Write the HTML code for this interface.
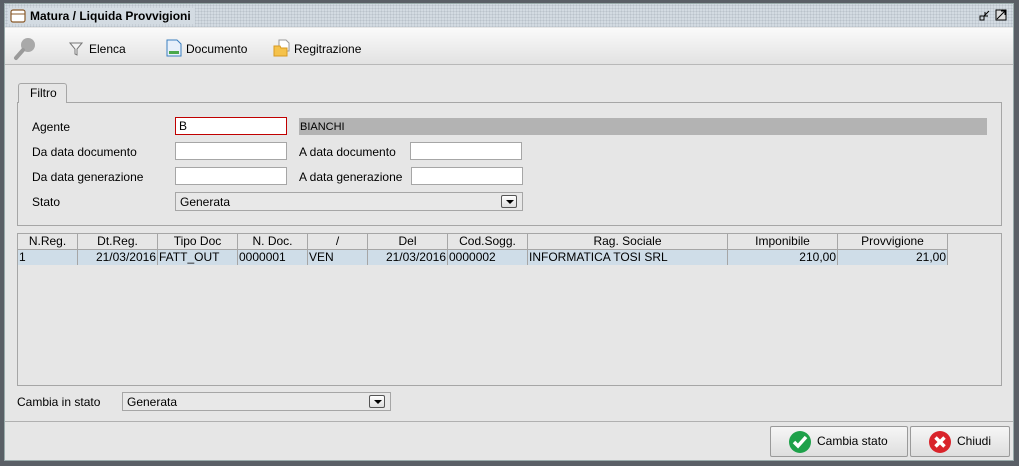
<!DOCTYPE html>
<html><head><meta charset="utf-8"><style>
*{box-sizing:border-box;margin:0;padding:0}
body{width:1019px;height:466px;background:#5a5f66;font-family:"Liberation Sans",sans-serif;font-size:12px;color:#000;position:relative;overflow:hidden}
.a{position:absolute}
.win{left:4px;top:3px;width:1010px;height:458px;background:#e6e6e6;border:1px solid #9aa}
.title{left:5px;top:4px;width:1008px;height:23px;background-color:#d3dbe2;background-image:radial-gradient(#b9c2ca 0.8px,transparent 0.9px);background-size:3px 3px}
.tt{left:8px;top:8px;height:16px;padding:0 4px 0 22px;background:#d3dbe2;font-weight:bold;font-size:12px;line-height:16px}
.tb{left:5px;top:28px;width:1008px;height:37px;background:linear-gradient(#fafafa,#e2e2e2);border-bottom:1px solid #b8b8b8}
.inp{background:#fff;border:1px solid #a6a6a6;height:18px;line-height:16px;padding-left:3px}
.lbl{line-height:14px}
.combo{background:#e8e8e8;border:1px solid #a6a6a6;height:19px;line-height:18px;padding-left:4px}
.arr{position:absolute;right:5px;top:2px;width:16px;height:13px;border:1px solid #555;border-radius:2px;background:linear-gradient(#fff,#ddd)}
.arr:after{content:"";position:absolute;left:4px;top:4px;border-left:4px solid transparent;border-right:4px solid transparent;border-top:4px solid #000}
.th{top:234px;height:16px;border-right:1px solid #a6a6a6;border-bottom:1px solid #a6a6a6;text-align:center;line-height:15px;background:#e6e6e6}
.td{top:250px;height:15px;border-right:1px solid #a6a6a6;background:#cfdde8;line-height:14px;padding:0 1px;white-space:nowrap}
.btn{top:426px;height:31px;border:1px solid #9a9a9a;border-radius:2px;background:linear-gradient(#f6f6f6,#dedede);line-height:29px;font-size:12px}
</style></head><body>
<div class="a win"></div>
<div class="a title"></div>
<div class="a tt">Matura / Liquida Provvigioni</div>
<svg class="a" style="left:10px;top:9px" width="16" height="14"><rect x="1" y="1" width="14" height="12" rx="2" fill="#fff" stroke="#8a5a2a" stroke-width="1.2"/><line x1="1" y1="5" x2="15" y2="5" stroke="#8a5a2a"/></svg>
<svg class="a" style="left:978px;top:7px" width="34" height="16"><rect x="2" y="9" width="4" height="4" fill="none" stroke="#000"/><path d="M6 9 L11 4 M7 5 L7 9 L10 9" stroke="#000" fill="none"/><rect x="18" y="3" width="10" height="10" fill="#ddd" stroke="#000"/><path d="M19 12 L27 4 M23 4 L27 4 L27 8" stroke="#000" fill="none"/></svg>
<div class="a tb"></div>
<svg class="a" style="left:12px;top:36px" width="26" height="26"><circle cx="16" cy="9" r="7" fill="#a9a9a9"/><line x1="11" y1="14" x2="4" y2="22" stroke="#9a9a9a" stroke-width="4" stroke-linecap="round"/></svg>
<svg class="a" style="left:69px;top:41px" width="14" height="16"><path d="M1 2 H13 L8 8 V14 L6 13 V8 Z" fill="#f4f4f4" stroke="#777"/></svg>
<div class="a" style="left:89px;top:42px;line-height:14px">Elenca</div>
<svg class="a" style="left:166px;top:39px" width="16" height="18"><path d="M1 1 H11 L15 5 V17 H1 Z" fill="#e8f0fa" stroke="#3b7fc0"/><rect x="3" y="12" width="10" height="3" fill="#4aa84a"/></svg>
<div class="a" style="left:186px;top:42px;line-height:14px">Documento</div>
<svg class="a" style="left:273px;top:39px" width="17" height="18"><path d="M6 1 H13 L16 4 V12 H6 Z" fill="#fff" stroke="#999"/><path d="M1 7 H7 L8 9 H14 V17 H1 Z" fill="#f5c24b" stroke="#d89a20"/></svg>
<div class="a" style="left:294px;top:42px;line-height:14px">Regitrazione</div>

<div class="a" style="left:17px;top:102px;width:985px;height:124px;border:1px solid #a6a6a6"></div>
<div class="a" style="left:18px;top:83px;width:49px;height:20px;border:1px solid #a6a6a6;border-bottom:none;border-radius:3px 3px 0 0;background:#e6e6e6;padding-left:11px;line-height:19px">Filtro</div>

<div class="a lbl" style="left:32px;top:120px">Agente</div>
<div class="a inp" style="left:175px;top:117px;width:112px;border-color:#c00000">B</div>
<div class="a" style="left:299px;top:118px;width:688px;height:17px;background:#b3b3b3;line-height:18px;padding-left:1px;font-size:11px">BIANCHI</div>
<div class="a lbl" style="left:32px;top:145px">Da data documento</div>
<div class="a inp" style="left:175px;top:142px;width:112px"></div>
<div class="a lbl" style="left:299px;top:145px">A data documento</div>
<div class="a inp" style="left:410px;top:142px;width:112px"></div>
<div class="a lbl" style="left:32px;top:170px">Da data generazione</div>
<div class="a inp" style="left:175px;top:167px;width:112px"></div>
<div class="a lbl" style="left:299px;top:170px">A data generazione</div>
<div class="a inp" style="left:411px;top:167px;width:112px"></div>
<div class="a lbl" style="left:32px;top:195px">Stato</div>
<div class="a combo" style="left:175px;top:192px;width:348px">Generata<div class="arr"></div></div>

<div class="a" style="left:17px;top:233px;width:985px;height:153px;border:1px solid #a6a6a6"></div>
<div class="a th" style="left:18px;width:60px">N.Reg.</div>
<div class="a th" style="left:78px;width:80px">Dt.Reg.</div>
<div class="a th" style="left:158px;width:80px">Tipo Doc</div>
<div class="a th" style="left:238px;width:70px">N. Doc.</div>
<div class="a th" style="left:308px;width:60px">/</div>
<div class="a th" style="left:368px;width:80px">Del</div>
<div class="a th" style="left:448px;width:80px">Cod.Sogg.</div>
<div class="a th" style="left:528px;width:200px">Rag. Sociale</div>
<div class="a th" style="left:728px;width:110px">Imponibile</div>
<div class="a th" style="left:838px;width:110px">Provvigione</div>
<div class="a td" style="left:18px;width:60px">1</div>
<div class="a td" style="left:78px;width:80px;text-align:right">21/03/2016</div>
<div class="a td" style="left:158px;width:80px">FATT_OUT</div>
<div class="a td" style="left:238px;width:70px">0000001</div>
<div class="a td" style="left:308px;width:60px">VEN</div>
<div class="a td" style="left:368px;width:80px;text-align:right">21/03/2016</div>
<div class="a td" style="left:448px;width:80px">0000002</div>
<div class="a td" style="left:528px;width:200px">INFORMATICA TOSI SRL</div>
<div class="a td" style="left:728px;width:110px;text-align:right">210,00</div>
<div class="a td" style="left:838px;width:110px;text-align:right">21,00</div>

<div class="a lbl" style="left:17px;top:395px">Cambia in stato</div>
<div class="a combo" style="left:122px;top:392px;width:269px">Generata<div class="arr"></div></div>

<div class="a" style="left:5px;top:421px;width:1008px;height:1px;background:#b0b0b0"></div>
<div class="a btn" style="left:770px;width:138px"><svg class="a" style="left:17px;top:3px" width="24" height="24"><circle cx="12" cy="12" r="11" fill="#1ea14a"/><path d="M6 12 L10 16 L18 7" stroke="#fff" stroke-width="3.5" fill="none"/></svg><span class="a" style="left:46px">Cambia stato</span></div>
<div class="a btn" style="left:910px;width:100px"><svg class="a" style="left:17px;top:3px" width="24" height="24"><circle cx="12" cy="12" r="11" fill="#d9232b"/><path d="M7.5 7.5 L16.5 16.5 M16.5 7.5 L7.5 16.5" stroke="#fff" stroke-width="3.5"/></svg><span class="a" style="left:46px">Chiudi</span></div>
</body></html>
